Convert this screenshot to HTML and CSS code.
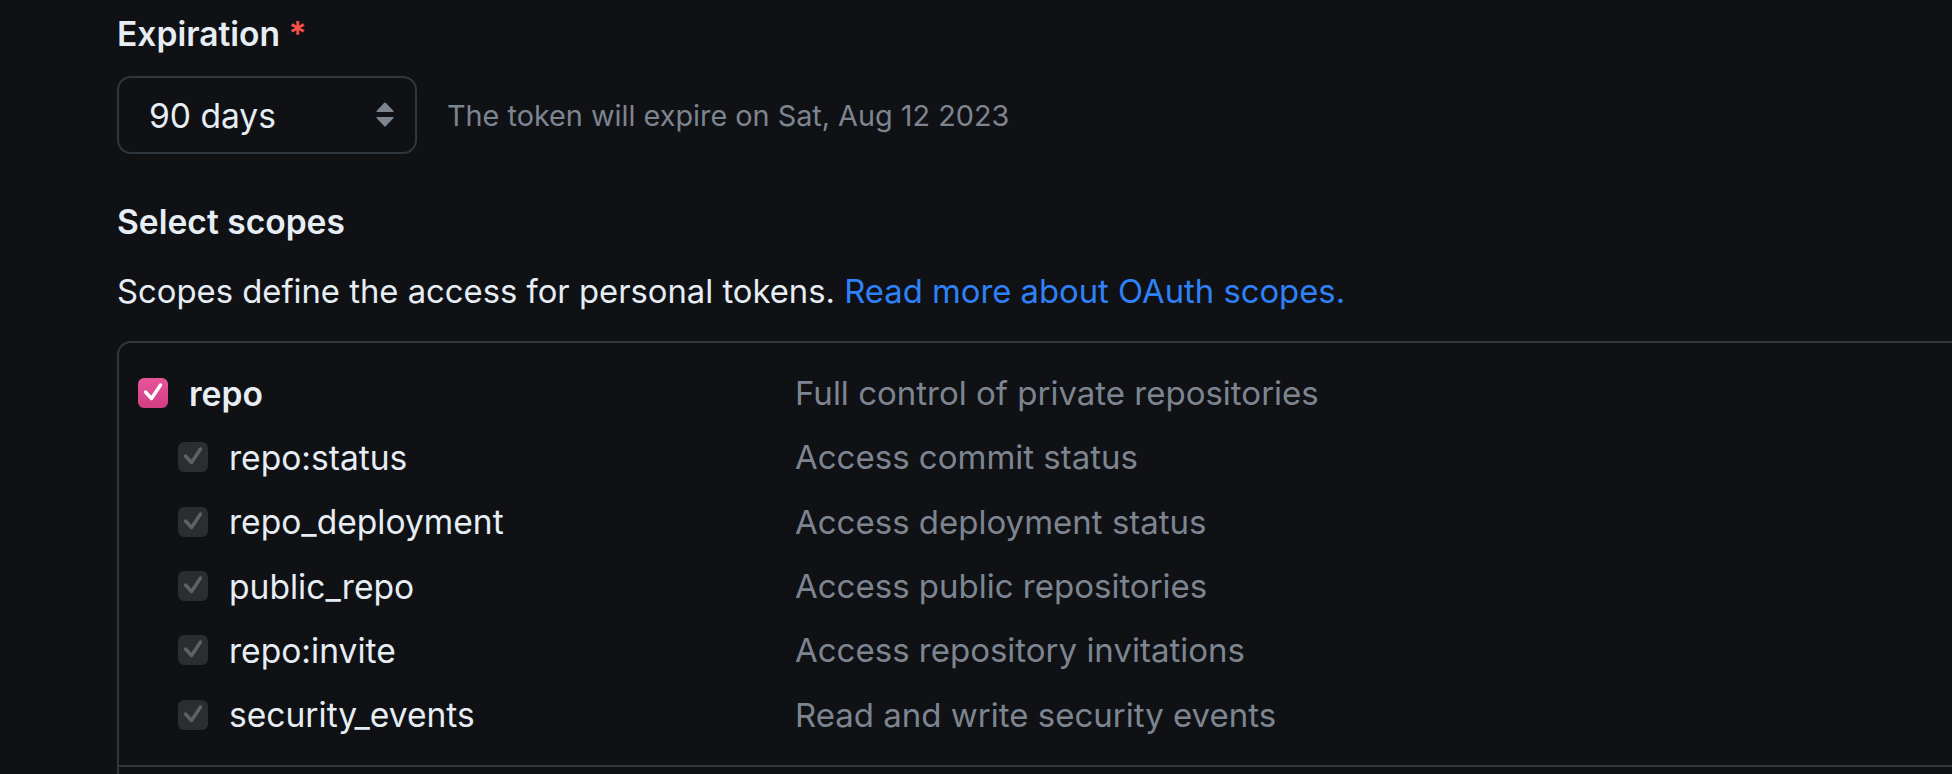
FILE: index.html
```html
<!DOCTYPE html>
<html lang="en">
<head>
<meta charset="utf-8">
<title>New personal access token</title>
<link rel="stylesheet" href="styles.css">
</head>
<body>
<div class="page">
  <div class="field">
    <div class="label">Expiration <span class="req">*</span></div>
    <div class="exp-row">
      <div class="select">
        <span class="select-value">90 days</span>
        <svg class="select-caret" width="18" height="26" viewBox="0 0 18 26"><path d="M9 0.5 Q9.6 0.5 10 1 L17.5 9 Q18 10 17 10 L1 10 Q0 10 0.5 9 L8 1 Q8.4 0.5 9 0.5 Z" fill="#7d8590"/><path d="M1 15 L17 15 Q18 15 17.5 16 L10 24 Q9 25 8 24 L0.5 16 Q0 15 1 15 Z" fill="#7d8590"/></svg>
      </div>
      <span class="note">The token will expire on Sat, Aug 12 2023</span>
    </div>
  </div>

  <div class="label scopes-title">Select scopes</div>
  <p class="scopes-desc">Scopes define the access for personal tokens. <a href="#">Read more about OAuth scopes.</a></p>

  <div class="scopes-box">
    <ul class="group">
      <li class="scope parent">
        <span class="check check-on"><svg width="30" height="30" viewBox="0 0 30 30"><path d="M7.5 14 L13.5 20.5 L22.5 7" fill="none" stroke="#fff" stroke-width="3.4" stroke-linecap="round" stroke-linejoin="round"/></svg></span>
        <span class="scope-name">repo</span>
        <span class="scope-desc">Full control of private repositories</span>
      </li>
      <li class="scope child">
        <span class="check check-dis"><svg width="30" height="30" viewBox="0 0 30 30"><path d="M7.5 14 L13.5 20.5 L22.5 7" fill="none" stroke="#5e6166" stroke-width="3.4" stroke-linecap="round" stroke-linejoin="round"/></svg></span>
        <span class="scope-name">repo:status</span>
        <span class="scope-desc">Access commit status</span>
      </li>
      <li class="scope child">
        <span class="check check-dis"><svg width="30" height="30" viewBox="0 0 30 30"><path d="M7.5 14 L13.5 20.5 L22.5 7" fill="none" stroke="#5e6166" stroke-width="3.4" stroke-linecap="round" stroke-linejoin="round"/></svg></span>
        <span class="scope-name">repo_deployment</span>
        <span class="scope-desc">Access deployment status</span>
      </li>
      <li class="scope child">
        <span class="check check-dis"><svg width="30" height="30" viewBox="0 0 30 30"><path d="M7.5 14 L13.5 20.5 L22.5 7" fill="none" stroke="#5e6166" stroke-width="3.4" stroke-linecap="round" stroke-linejoin="round"/></svg></span>
        <span class="scope-name">public_repo</span>
        <span class="scope-desc">Access public repositories</span>
      </li>
      <li class="scope child">
        <span class="check check-dis"><svg width="30" height="30" viewBox="0 0 30 30"><path d="M7.5 14 L13.5 20.5 L22.5 7" fill="none" stroke="#5e6166" stroke-width="3.4" stroke-linecap="round" stroke-linejoin="round"/></svg></span>
        <span class="scope-name">repo:invite</span>
        <span class="scope-desc">Access repository invitations</span>
      </li>
      <li class="scope child">
        <span class="check check-dis"><svg width="30" height="30" viewBox="0 0 30 30"><path d="M7.5 14 L13.5 20.5 L22.5 7" fill="none" stroke="#5e6166" stroke-width="3.4" stroke-linecap="round" stroke-linejoin="round"/></svg></span>
        <span class="scope-name">security_events</span>
        <span class="scope-desc">Read and write security events</span>
      </li>
    </ul>
    <div class="group-sep"></div>
  </div>
</div>
</body>
</html>
```

FILE: styles.css
```css
html, body {
  margin: 0;
  padding: 0;
  background: #0f1115;
  overflow: hidden;
  height: 774px;
}

body {
  font-family: Inter, "Noto Sans", "Liberation Sans", sans-serif;
  color: #e6edf3;
}

.page {
  padding: 10px 0 0 117px;
}

.label {
  font-size: 33.6px;
  font-weight: 600;
  line-height: 48px;
  color: #e6edf3;
}

.req {
  color: #f85149;
}

.exp-row {
  display: flex;
  align-items: center;
  margin-top: 18px;
}

.select {
  box-sizing: border-box;
  width: 300px;
  height: 78px;
  border: 2px solid #30363d;
  border-radius: 14px;
  display: flex;
  align-items: center;
  justify-content: space-between;
  padding: 0 21px 0 30px;
}

.select-value {
  font-size: 33.6px;
  color: #e6edf3;
}

.select-caret {
  display: block;
}

.note {
  margin-left: 30px;
  font-size: 28.8px;
  color: #7d8590;
}

.scopes-title {
  margin-top: 44px;
}

.scopes-desc {
  margin: 21px 0 0;
  font-size: 32.8px;
  line-height: 48px;
  color: #e6edf3;
}

.scopes-desc a {
  color: #2f81f7;
  text-decoration: none;
}

.scopes-box {
  margin-top: 26px;
  margin-right: -60px;
  border: 2px solid #30363d;
  border-bottom: none;
  border-radius: 14px 0 0 0;
}

.group {
  list-style: none;
  margin: 0;
  padding: 18px 0 18px 19px;
}

.group-sep {
  height: 40px;
  border-top: 2px solid #30363d;
}

.scope {
  display: flex;
  align-items: center;
  height: 64.3px;
  font-size: 33.6px;
}

.scope.child {
  padding-left: 40px;
}

.check {
  box-sizing: border-box;
  flex: none;
  width: 30px;
  height: 30px;
  border-radius: 6px;
  display: flex;
  align-items: center;
  justify-content: center;
  margin-right: 21px;
}

.check svg {
  display: block;
}

.check-on {
  background: linear-gradient(#e6559a, #d33e83);
}

.check-dis {
  background: #2b2d31;
}

.scope-name {
  width: 0;
  flex: 1 0 0;
  color: #e6edf3;
}

.parent .scope-name {
  font-weight: 600;
  max-width: 606px;
}

.child .scope-name {
  max-width: 566px;
}

.scope-desc {
  font-size: 33px;
  color: #7d8590;
}
```
